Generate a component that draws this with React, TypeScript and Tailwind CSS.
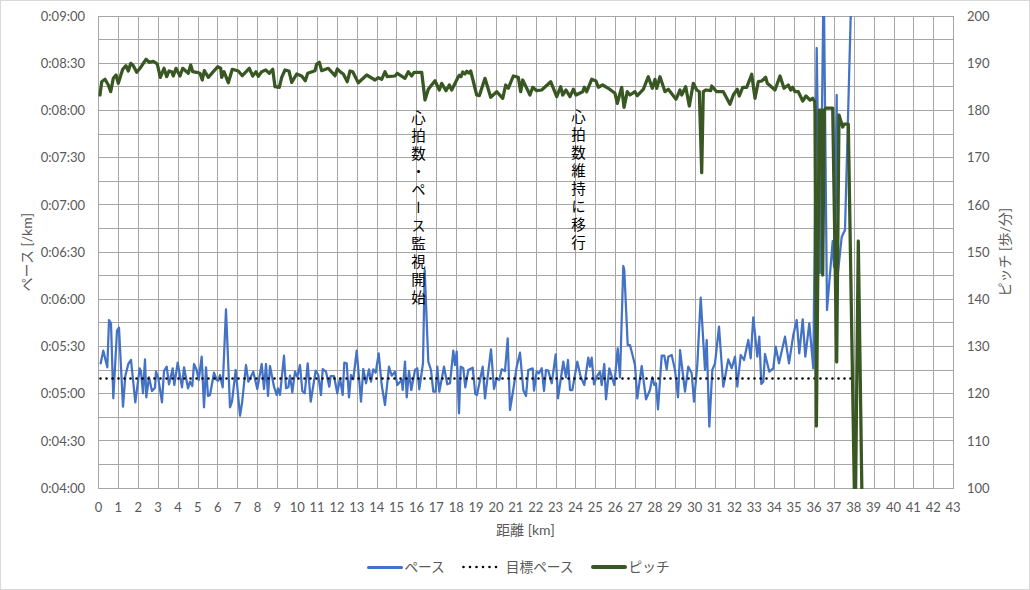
const z = (ox: number, oy: number, pts: number[]) => {
  const out: [number, number][] = [];
  for (let i = 0; i < pts.length; i += 2) out.push([ox + pts[i] / 3, oy + pts[i + 1] / 3]);
  return out;
};

const pitch1 = [300,285,305,245,315,238,325,255,332,275,340,235,348,225,355,250,368,208,378,197,385,213,392,190,400,197,410,217,420,205,430,190,438,178,448,187,460,184,472,192,481,232,492,205,500,230,507,213,515,215,520,228,528,205,540,228,548,205,565,220,572,195,578,215,590,217,600,220,607,240,613,212,625,232,640,215,653,200,662,205,665,232,672,215,685,248,697,208,715,213,727,227,748,205,758,228,768,215,775,229,785,215,797,210,808,220,818,208,825,260,838,262,845,232,855,210,867,213,875,247,890,222,905,228,916,242,923,220,945,212,950,192,958,187,965,212,985,205,1005,227,1012,207,1020,215];
const pitch2 = [10,222,22,245,30,213,38,215,55,248,80,225,105,240,115,233,125,238,135,215,142,230,165,228,172,220,195,235,205,215,215,228,222,217,245,217,255,300,265,268,285,242,298,270,305,250,318,272,328,255,335,270,350,240,354,232,358,226,363,230,368,216,375,222,380,214,386,219,392,213,410,285,418,287,435,235,452,292,470,275,488,295,497,255,505,265,520,228,535,232,542,275,548,240,570,285,578,262,590,272,605,270,632,245,650,290,662,260,668,285,678,270,690,290,700,268,708,285,728,275,733,262,740,275,755,238,768,243,775,262,788,255,805,265,825,280,832,310,845,262,852,322,862,275,870,285,885,275,892,287,910,268,925,230,937,265,945,238,950,265,960,230,975,275,985,268,1008,298,1020,270];
const pitch3 = [5,285,17,260,28,318,40,250,50,270,58,275,65,518,70,275,78,270,92,272,95,258,110,275,130,275,150,313,160,285,172,268,178,288,188,262,200,262,215,223,225,295,235,245,245,243,257,232,262,250,285,270,300,228,312,265,325,255,332,270,338,262,345,275,355,275,368,303,378,288,390,300,398,295,404,305];
const pitchEnd: [number, number][] = [[815,112],[816.4,426],[819.3,110],[821.8,110],[822.7,275],[824.3,110],[826,108],[832.7,108],[836.7,362],[839,115],[842.7,127],[844,124],[848.3,124],[854.5,500],[855.5,500],[858.3,241],[862,500]];
const pitchPts = [...z(0, 0, pitch1), ...z(340, 0, pitch2), ...z(680, 0, pitch3), ...pitchEnd];

const pace1 = [302,220,310,182,322,232,327,90,333,100,340,325,351,122,357,113,369,350,376,258,385,222,393,210,406,337,419,235,423,245,429,310,435,208,439,322,447,262,456,303,465,293,468,245,475,265,486,337,492,243,500,230,507,283,518,235,523,285,533,218,546,292,552,232,564,295,570,275,577,288,582,222,590,240,596,270,605,200,612,352,618,232,624,318,630,315,642,248,650,270,655,272,660,255,668,292,678,58,690,352,696,335,707,240,720,377,726,340,738,225,745,275,760,245,772,297,785,222,792,297,798,222,804,318,810,228,822,290,830,315,834,295,840,315,852,197,858,295,865,292,870,257,877,307,885,245,892,260,900,225,907,303,914,310,923,220,932,335,947,242,955,255,963,315,968,237,978,245,988,290,992,258,1002,258,1012,310,1020,265];
const pace2 = [8,315,13,218,20,220,27,322,33,255,40,268,50,182,63,335,70,237,78,280,87,238,93,275,100,238,107,248,116,190,125,285,135,345,147,230,155,257,165,245,172,285,185,270,188,300,195,215,200,322,207,243,214,300,225,240,232,235,238,298,249,220,254,-60,265,215,273,240,280,305,287,305,292,230,298,305,312,230,322,283,330,280,340,182,345,225,350,185,357,370,362,230,370,235,376,292,385,240,398,233,406,312,411,315,428,230,435,325,453,178,462,297,470,265,478,270,485,238,495,243,503,145,510,360,522,285,530,230,540,188,550,300,558,318,565,240,578,235,582,302,590,245,597,250,605,235,612,303,618,240,625,242,635,280,647,193,654,325,670,215,678,262,684,210,690,300,697,300,712,215,722,260,733,285,745,203,750,230,755,203,762,283,770,260,780,245,785,285,793,222,798,328,808,235,823,285,833,175,840,262,850,-72,853,-60,863,165,870,165,885,225,892,325,905,228,918,328,930,300,937,262,943,285,948,280,954,358,965,197,973,197,980,238,985,200,995,195,1005,240,1014,322,1020,190];
const pace3 = [0,450,15,575,25,500,35,520,42,605,52,495,62,293,75,510,80,420,88,680,97,510,105,490,117,380,130,560,145,478,155,505,165,470,172,560,182,465,192,480,205,420,212,475,220,352,232,470,238,410,244,552,250,545,255,462,268,515,280,505,287,440,297,490,315,410,327,490,340,405,350,360,358,460,368,358,376,470,388,370,400,505];
const paceEnd: [number, number][] = [[816.7,48],[820,273],[823.3,5],[824,5],[827,310],[832.7,241],[834,267],[836.7,95],[837.7,275],[841.7,237],[845,230],[851,5]];
const pacePts = [...z(0, 290, pace1), ...z(340, 290, pace2), ...z(680, 200, pace3), ...paceEnd];

const toStr = (p: [number, number][]) => p.map(([x, y]) => `${x.toFixed(1)},${y.toFixed(1)}`).join(" ");

const vx = Array.from({ length: 44 }, (_, i) => 98 + 20 * i - (i >= 6 ? 1 : 0) - (i >= 15 ? 1 : 0) - (i >= 24 ? 1 : 0) - (i >= 33 ? 1 : 0) - (i >= 41 ? 1 : 0));
const hy = Array.from({ length: 21 }, (_, i) => Math.floor(16 + 23.6 * i));

const leftTicks = ["0:09:00", "0:08:30", "0:08:00", "0:07:30", "0:07:00", "0:06:30", "0:06:00", "0:05:30", "0:05:00", "0:04:30", "0:04:00"];
const rightTicks = ["200", "190", "180", "170", "160", "150", "140", "130", "120", "110", "100"];

const BLUE = "#4472C4";
const GREEN = "#385723";

function Chart() {
  return (
    <svg width={856} height={473} viewBox="98 16 856 473" className="block shrink-0">
      {hy.map((y) => (
        <line key={y} x1={98} x2={954} y1={y + 0.5} y2={y + 0.5} stroke="#a6a6a6" strokeWidth={1} />
      ))}
      {vx.map((x) => (
        <line key={x} x1={x + 0.5} x2={x + 0.5} y1={16} y2={489} stroke="#a6a6a6" strokeWidth={1} />
      ))}
      <polyline points={toStr(pacePts)} fill="none" stroke={BLUE} strokeWidth={2.25} strokeLinejoin="round" strokeLinecap="round" />
      <line x1={100.5} x2={851} y1={378.5} y2={378.5} stroke="#000" strokeWidth={2.6} strokeLinecap="round" strokeDasharray="0 6" />
      <polyline points={toStr(pitchPts)} fill="none" stroke={GREEN} strokeWidth={3.25} strokeLinejoin="round" strokeLinecap="round" />
    </svg>
  );
}

const Note = ({ children, className }: { children: string; className: string }) => (
  <div className={`absolute [writing-mode:vertical-rl] whitespace-nowrap text-black text-[14.5px] leading-[15px] tracking-[3.5px] ${className}`}>
    {children}
  </div>
);

export default function App() {
  return (
    <div
      className="relative w-[1030px] h-[590px] bg-white border border-[#d9d9d9] overflow-hidden flex flex-col pt-[15px] text-[#595959]"
      style={{ fontFamily: 'Lato, "Noto Sans CJK JP", sans-serif' }}
    >
      <div className="flex h-[473px] items-start">
        <div className="w-[35px] h-full pl-[17px] flex items-center justify-center shrink-0">
          <div className="[writing-mode:vertical-rl] [text-orientation:sideways] rotate-180 whitespace-nowrap text-[14px] leading-[18px]">
            ペース [/km]
          </div>
        </div>
        <div className="w-[49px] shrink-0 mr-[13px] -mt-[23px] flex flex-col items-end">
          {leftTicks.map((t) => (
            <div key={t} className="h-[47.2px] flex items-center text-[13px]">{t}</div>
          ))}
        </div>
        <div className="relative shrink-0">
          <Chart />
          <Note className="left-[312px] top-[94px]">心拍数・ペース監視開始</Note>
          <Note className="left-[472px] top-[93px]">心拍数維持に移行</Note>
        </div>
        <div className="w-[42px] shrink-0 pl-[13px] -mt-[23px] flex flex-col items-start">
          {rightTicks.map((t) => (
            <div key={t} className="h-[47.2px] flex items-center text-[13px]">{t}</div>
          ))}
        </div>
        <div className="w-[18px] h-full flex items-center justify-center shrink-0">
          <div className="[writing-mode:vertical-rl] [text-orientation:sideways] rotate-180 whitespace-nowrap text-[14px] leading-[18px]">
            ピッチ [歩/分]
          </div>
        </div>
      </div>
      <div className="flex ml-[87.5px] mt-[9px] h-[18px]">
        {vx.map((_, i) => (
          <div key={i} className="w-[19.88px] shrink-0 text-center text-[13px] leading-[18px]">{i}</div>
        ))}
      </div>
      <div className="flex justify-center pl-[21px] mt-[5px] h-[18px] text-[14px] leading-[18px]">距離 [km]</div>
      <div className="flex justify-center items-center pl-[7px] mt-[19px] h-[18px] text-[13.7px] leading-[18px]">
        <div className="w-[36px] h-[3px] bg-[#4472C4] rounded-full mr-px" />
        <span>ペース</span>
        <svg width={36} height={4} className="ml-[17px] mr-[8px]">
          <line x1={1.5} x2={35} y1={2} y2={2} stroke="#000" strokeWidth={2.6} strokeLinecap="round" strokeDasharray="0 6.5" />
        </svg>
        <span>目標ペース</span>
        <div className="w-[36px] h-[3.5px] bg-[#385723] rounded-full ml-[17px] mr-[2px]" />
        <span>ピッチ</span>
      </div>
    </div>
  );
}
